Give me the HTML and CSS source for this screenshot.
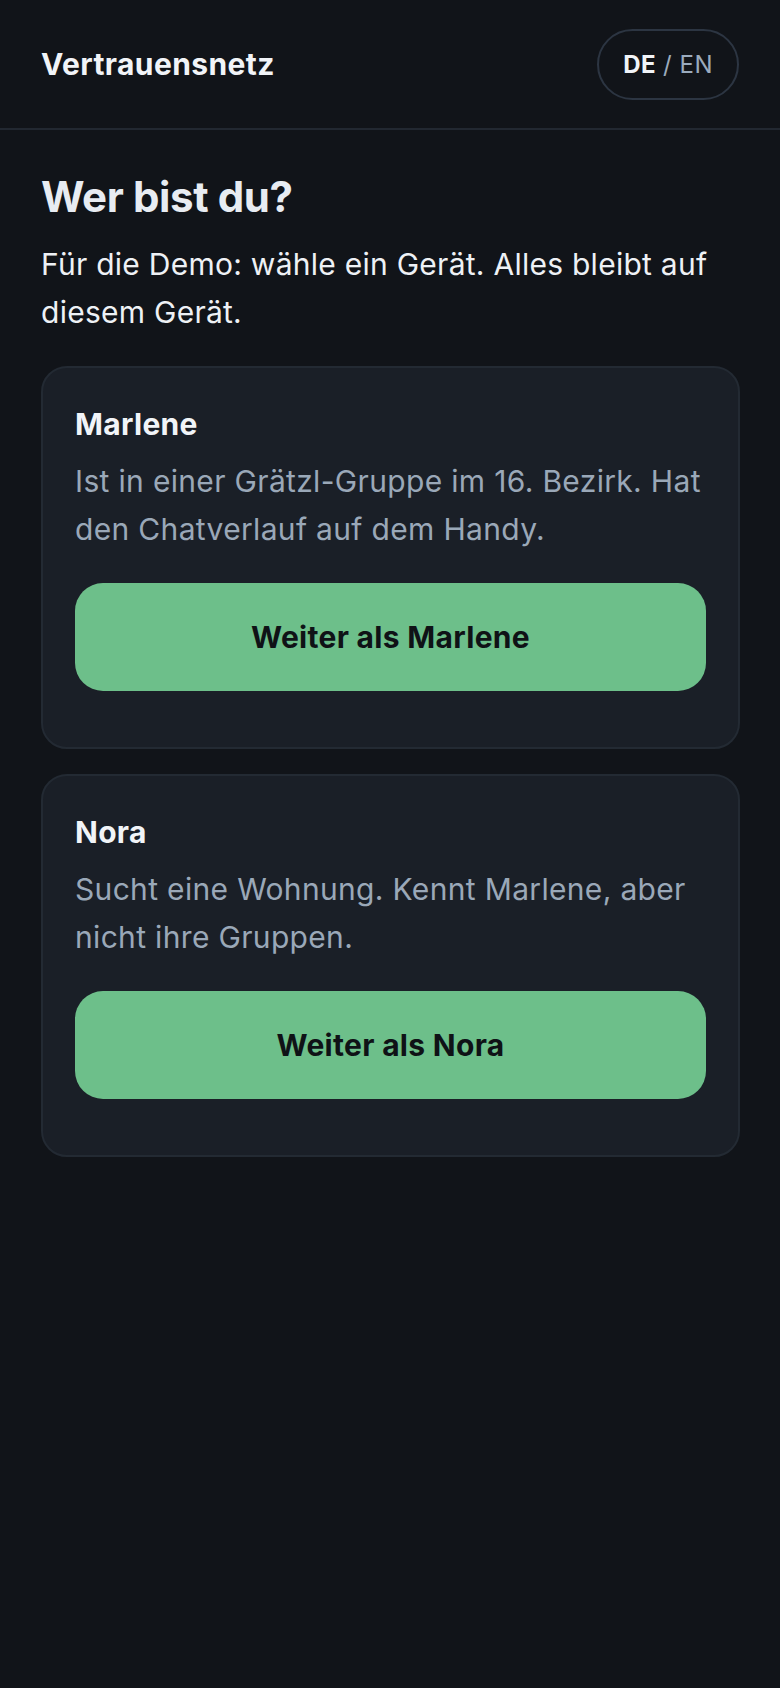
FILE: index.html
```html
<!DOCTYPE html>
<html lang="de">
<head>
    <meta charset="UTF-8">
    <meta name="viewport" content="width=device-width, initial-scale=1.0">
    <title>Vertrauensnetz</title>
    <link rel="stylesheet" href="styles.css">
</head>
<body>

    <header class="topbar">
        <div class="brand">Vertrauensnetz</div>
        <button class="lang-switch"><b>DE</b> <span>/ EN</span></button>
    </header>

    <main class="content">
        <h1>Wer bist du?</h1>
        <p class="intro">Für die Demo: wähle ein Gerät. Alles bleibt auf diesem Gerät.</p>

        <div class="card">
            <h2>Marlene</h2>
            <p class="card-text">Ist in einer Grätzl-Gruppe im 16. Bezirk. Hat den Chatverlauf auf dem Handy.</p>
            <button class="btn-primary">Weiter als Marlene</button>
        </div>

        <div class="card">
            <h2>Nora</h2>
            <p class="card-text">Sucht eine Wohnung. Kennt Marlene, aber nicht ihre Gruppen.</p>
            <button class="btn-primary">Weiter als Nora</button>
        </div>
    </main>

</body>
</html>
```

FILE: styles.css
```css
body {
    background-color: #111419;
    color: #e8ecf2;
    font-family: 'Inter', 'Noto Sans', sans-serif;
    margin: 0;
}

.topbar {
    height: 128px;
    padding: 0 41px;
    display: flex;
    align-items: center;
    justify-content: space-between;
    border-bottom: 2px solid #222831;
}

.brand {
    font-size: 30px;
    font-weight: 700;
    letter-spacing: 0.4px;
    color: #f1f4f8;
}

.lang-switch {
    height: 71px;
    padding: 0 24px;
    border: 2px solid #2c3542;
    border-radius: 36px;
    background: transparent;
    font-family: inherit;
    font-size: 24px;
    letter-spacing: 0.5px;
    color: #f1f4f8;
    display: flex;
    align-items: center;
    gap: 7px;
    cursor: pointer;
}

.lang-switch b {
    font-weight: 700;
}

.lang-switch span {
    color: #9babbd;
}

.content {
    padding: 42px 40px;
}

h1 {
    font-size: 42px;
    font-weight: 700;
    line-height: 1.2;
    letter-spacing: -0.4px;
    margin: 0 0 18px 1px;
    color: #e8ecf2;
}

.intro {
    font-size: 30px;
    line-height: 48px;
    letter-spacing: 0.26px;
    margin: 0 0 30px 1px;
    color: #eef1f5;
}

.card {
    background-color: #1a1f27;
    border: 2px solid #232a33;
    border-radius: 26px;
    padding: 34px 32px 56px;
    margin: 0 0 25px 1px;
}

.card h2 {
    font-size: 30px;
    font-weight: 700;
    line-height: 1.5;
    letter-spacing: 0.3px;
    margin: 0 0 10px;
    color: #f1f4f8;
}

.card-text {
    font-size: 30px;
    line-height: 48px;
    letter-spacing: 0.33px;
    margin: 0 0 30px;
    color: #9aa8b8;
}

.btn-primary {
    width: 100%;
    height: 108px;
    border: none;
    border-radius: 28px;
    background-color: #6dbf8a;
    color: #0f1216;
    font-family: inherit;
    font-size: 30px;
    font-weight: 700;
    letter-spacing: 0.3px;
    cursor: pointer;
}

.btn-primary:hover {
    background-color: #62b27e;
}
```
